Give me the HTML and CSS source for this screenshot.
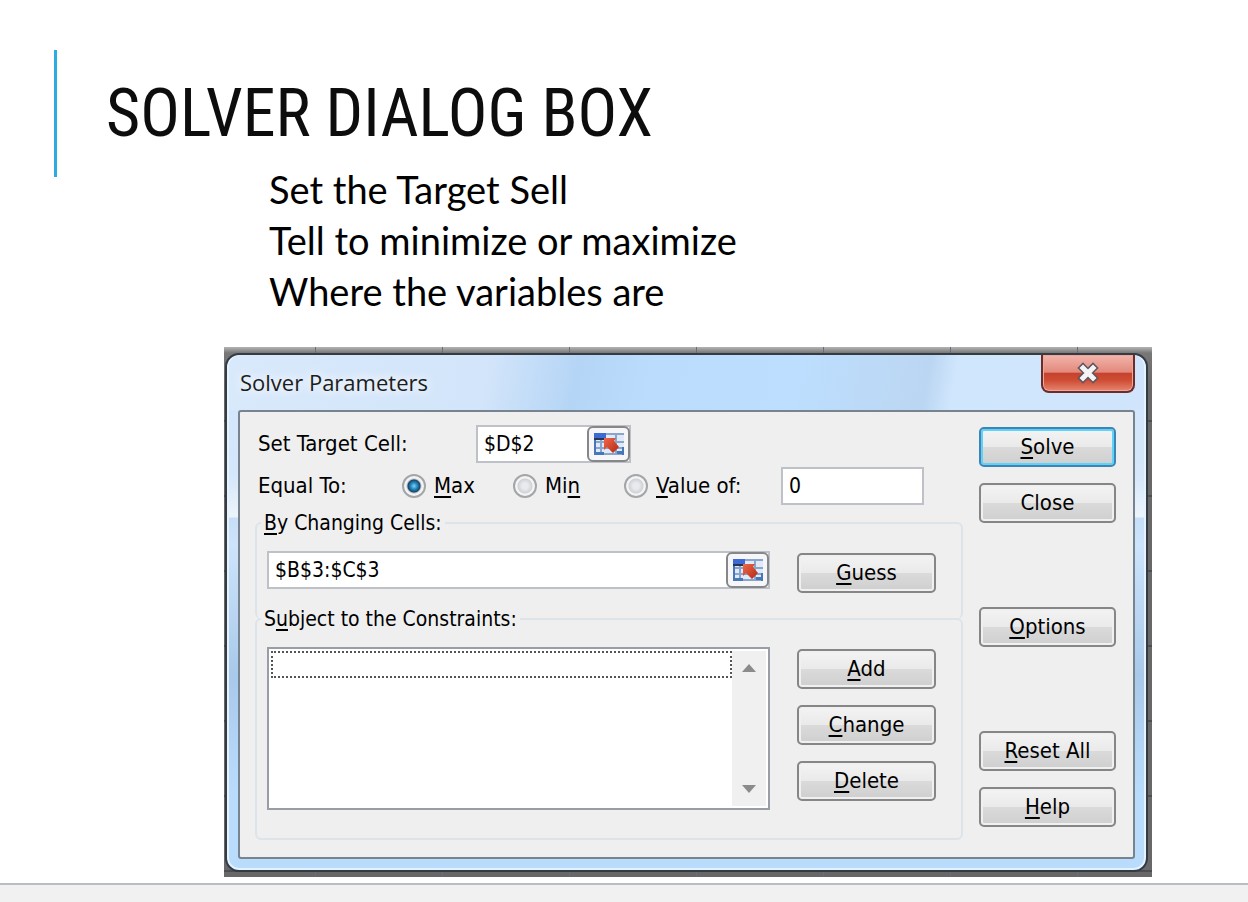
FILE: index.html
```html
<!DOCTYPE html>
<html lang="en">
<head>
  <meta charset="UTF-8">
  <meta name="viewport" content="width=device-width, initial-scale=1.0">
  <title>Solver Dialog Box</title>
  <link rel="stylesheet" href="styles.css">
</head>

<body>
  <svg width="0" height="0" class="sprite" aria-hidden="true">
    <defs>
      <linearGradient id="arrow-red" x1="0" y1="0" x2="1" y2="1">
        <stop offset="0" stop-color="#f0694a"/>
        <stop offset="1" stop-color="#b32712"/>
      </linearGradient>
    </defs>
    <symbol id="icon-ref" viewBox="0 0 32 24">
      <path fill="#dfe9f7" d="M1 1h30v22H1z"/>
      <path fill="#8aa5cd" d="M13 1h18v2H13zM1 9h30v2H1zM1 15h30v2H1zM1 21h30v2H1zM7 8h2v15H7zM22 1h2v22h-2z"/>
      <path fill="#4777b8" d="M1 8h2v15H1zM29 15h2v8h-2zM3 20h8v3H3zM24 19h5v3h-5z"/>
      <path fill="#3c6bd5" d="M1 1h12v5H1z"/>
      <path fill="#27364f" d="M1 6h10v2H1z"/>
      <path fill="url(#arrow-red)" d="M11 6h12l-2 3 5 6-6 6-6-6-3 3z"/>
    </symbol>
  </svg>

  <main class="slide">
    <header class="slide-header">
      <h1>SOLVER DIALOG BOX</h1>
    </header>

    <div class="slide-text">
      <p>Set the Target Sell</p>
      <p>Tell to minimize or maximize</p>
      <p>Where the variables are</p>
    </div>

    <div class="sheet">
      <form class="dialog" onsubmit="return false">
        <div class="titlebar">
          <h2>Solver Parameters</h2>
          <button type="button" class="btn-x" aria-label="Close window">
            <svg width="24" height="22" viewBox="0 0 24 22" fill="none">
              <path d="M7 6l10 10M17 6L7 16" stroke="#5d5560" stroke-width="8" stroke-linecap="square"/>
              <path d="M7 6l10 10M17 6L7 16" stroke="#f4f4f4" stroke-width="5" stroke-linecap="square"/>
            </svg>
          </button>
        </div>

        <div class="client">
          <div class="params">
            <div class="row">
              <label class="row-label" for="target">Set Target Cell:</label>
              <div class="ref ref-small">
                <input type="text" id="target" value="$D$2">
                <button type="button" class="btn-ref" aria-label="Select target cell"><svg width="32" height="24"><use href="#icon-ref"/></svg></button>
              </div>
            </div>

            <div class="row" role="radiogroup" aria-labelledby="equal">
              <span class="equal" id="equal">Equal To:</span>
              <label class="radio"><input type="radio" name="equal" checked><span><u>M</u>ax</span></label>
              <label class="radio"><input type="radio" name="equal"><span>Mi<u>n</u></span></label>
              <label class="radio radio-wide"><input type="radio" name="equal"><span><u>V</u>alue of:</span></label>
              <input type="text" class="value" value="0" aria-label="Value">
            </div>

            <fieldset class="group group-cells">
              <legend><u>B</u>y Changing Cells:</legend>
              <div class="group-body">
                <div class="ref">
                  <input type="text" value="$B$3:$C$3" aria-label="Changing cells">
                  <button type="button" class="btn-ref" aria-label="Select changing cells"><svg width="32" height="24"><use href="#icon-ref"/></svg></button>
                </div>
                <div class="btn-col">
                  <button type="button" class="btn"><span><u>G</u>uess</span></button>
                </div>
              </div>
            </fieldset>

            <fieldset class="group group-constraints">
              <legend>S<u>u</u>bject to the Constraints:</legend>
              <div class="group-body">
                <div class="listbox">
                  <div class="list" role="listbox" aria-label="Constraints" tabindex="0">
                    <div class="list-item" role="option" aria-selected="false"></div>
                  </div>
                  <div class="scrollbar">
                    <button type="button" aria-label="Scroll up"><svg width="14" height="8"><path d="M0 8l7-8 7 8z" fill="#8b8b8b"/></svg></button>
                    <button type="button" aria-label="Scroll down"><svg width="14" height="8"><path d="M0 0h14L7 8z" fill="#8b8b8b"/></svg></button>
                  </div>
                </div>
                <div class="btn-col">
                  <button type="button" class="btn"><span><u>A</u>dd</span></button>
                  <button type="button" class="btn"><span><u>C</u>hange</span></button>
                  <button type="button" class="btn"><span><u>D</u>elete</span></button>
                </div>
              </div>
            </fieldset>
          </div>

          <div class="actions">
            <button type="submit" class="btn btn-default"><span><u>S</u>olve</span></button>
            <button type="button" class="btn"><span>Close</span></button>
            <button type="button" class="btn btn-apart"><span><u>O</u>ptions</span></button>
            <button type="button" class="btn btn-apart"><span><u>R</u>eset All</span></button>
            <button type="button" class="btn"><span><u>H</u>elp</span></button>
          </div>
        </div>
      </form>
    </div>
  </main>

  <footer class="statusbar"></footer>
</body>

</html>
```
FILE: styles.css
```css
* {
  box-sizing: border-box;
}

body {
  display: flex;
  flex-direction: column;
  min-height: 100vh;
  margin: 0;
  background-color: #ffffff;
  color: #000000;
}

h1,
h2,
p {
  margin: 0;
  font-weight: normal;
}

.sprite {
  position: absolute;
}

/* slide */
.slide {
  padding: 50px 96px 6px 54px;
}

.slide-header {
  display: flex;
  align-items: center;
  height: 127px;
  padding-left: 49px;
  border-left: 3px solid #2bace2;
}

.slide-header h1 {
  color: #0d0d0d;
  font: 66px/80px "Tw Cen MT Condensed", "Roboto Condensed", Roboto, sans-serif;
  white-space: nowrap;
}

.slide-text {
  margin: -13px 0 30px 215px;
  font: 38px/51px "Tw Cen MT", Lato, sans-serif;
}

/* strip of the worksheet behind the dialog */
.sheet {
  margin-left: 170px;
  padding: 6px 4px 5px 1px;
  background:
    repeating-linear-gradient(90deg, transparent 0 91px, #6a6c80 91px 92px, transparent 92px 127px),
    repeating-linear-gradient(transparent 0 73px, #4c4e55 73px 75px),
    linear-gradient(#b4b4b4, #777777 6px, #686868 40px);
}

/* dialog */
.dialog {
  padding: 0 11px 11px;
  border: 2px solid #353b43;
  border-radius: 14px;
  background: linear-gradient(#d3e6fb 60px, #d5e7fa 120px, #edf4fc 162px, #c6def7 163px, #cde4fb 190px, #a9c9ea 320px, #b9dcfd 440px);
  box-shadow: inset 0 0 0 2px #e4f3ff;
  font: 22px/28px Tahoma, "DejaVu Sans Condensed", sans-serif;
}

.titlebar {
  display: flex;
  justify-content: space-between;
  height: 55px;
  margin: 0 -9px;
  padding: 0 9px 0 11px;
  border-radius: 12px 12px 0 0;
  background: linear-gradient(100deg, #d8e9fb 0, #d3e5fa 28%, #b5d5f6 38%, #bbdcfd 46%, #bddefe 62%, #bbd6f2 76%, #d0e6fd 79%, #d0e5fb);
}

.titlebar h2 {
  padding-top: 12px;
  color: #1d1d1d;
  font: 22px/30px "Segoe UI", "Open Sans", sans-serif;
  text-shadow: 0 0 12px #ffffff, 0 0 12px #ffffff;
}

.btn-x {
  display: grid;
  place-items: center;
  width: 94px;
  height: 38px;
  padding: 0;
  border: 2px solid #6b2c2a;
  border-top: 0;
  border-radius: 0 0 8px 8px;
  background: linear-gradient(#f3b5ac, #e2887b 48%, #c5412c 50%, #cf4c34 70%, #e58671);
  box-shadow: inset 0 0 0 1px #eda79c;
}

.client {
  display: flex;
  gap: 16px;
  padding: 13px 17px 17px 15px;
  border: 2px solid #77838f;
  border-radius: 3px;
  background-color: #efefef;
}

.params {
  flex: 1;
  display: flex;
  flex-direction: column;
  gap: 4px;
}

u {
  text-decoration-thickness: 2px;
  text-underline-offset: 3px;
}

.row {
  display: flex;
  align-items: center;
  padding-left: 3px;
}

.row-label {
  width: 218px;
}

.equal {
  width: 144px;
}

input[type="text"] {
  min-width: 0;
  height: 38px;
  padding: 0 6px;
  border: 2px solid #bfc1c8;
  border-radius: 0;
  background-color: #ffffff;
  color: #000000;
  font: inherit;
  font-size: 21px;
}

.value {
  width: 143px;
}

.ref {
  flex: 1;
  display: grid;
}
.ref > * {
  grid-area: 1 / 1;
}

.ref-small {
  flex: none;
  width: 155px;
}

.btn-ref {
  display: grid;
  place-items: center;
  justify-self: end;
  width: 43px;
  height: 36px;
  margin: 1px;
  padding: 0;
  border: 2px solid #85878b;
  border-radius: 6px;
  background-color: #f6f6f8;
}

.radio {
  display: flex;
  align-items: center;
  gap: 8px;
  width: 111px;
}

.radio-wide {
  width: 157px;
}

.radio input {
  appearance: none;
  width: 24px;
  height: 24px;
  margin: 0;
  border: 2px solid #a3a5a7;
  border-radius: 50%;
  background: radial-gradient(circle, #e9eaed 3px, #cfd2d7 7px, #f4f4f4 8px);
}
.radio input:checked {
  background: radial-gradient(circle, #7fd4f5 0, #2990c8 3px, #1b4468 6px, #b9c2ca 7px, #f4f4f4 8px);
}

.group {
  min-width: 0;
  margin: 0;
  padding: 14px 25px 28px 10px;
  border: 2px solid #dce4ea;
  border-radius: 6px;
}

.group legend {
  margin-left: -6px;
  padding: 0 3px;
  font-size: 21px;
}

.group-cells {
  padding-bottom: 26px;
  border-bottom: 0;
}

/* the second caption sits on the edge shared by the two groups */
.group-constraints {
  margin-top: -18px;
}

.group-body {
  display: flex;
  gap: 27px;
}

.btn-col {
  display: flex;
  flex-direction: column;
  gap: 16px;
  width: 139px;
  padding-top: 2px;
}

.btn {
  height: 40px;
  padding: 0;
  border: 2px solid #868686;
  border-radius: 5px;
  background: linear-gradient(#f3f3f3, #eaeaea 49%, #dadada 51%, #cfcfcf);
  box-shadow: inset 0 0 0 2px #f0f0f0;
  color: #000000;
  font: inherit;
}

.btn-default {
  border-color: #3e85b5;
  box-shadow: inset 0 0 0 2px #5fd2f7;
}

.listbox {
  flex: 1;
  display: flex;
  height: 163px;
  padding: 2px;
  border: 2px solid #989da6;
  background-color: #ffffff;
}

.list {
  flex: 1;
}

.list-item {
  height: 27px;
  border: 2px dotted #555555;
}

.scrollbar {
  display: flex;
  flex-direction: column;
  justify-content: space-between;
  width: 34px;
  background-color: #f0f0f0;
}

.scrollbar button {
  display: grid;
  place-items: center;
  height: 34px;
  padding: 0;
  border: 0;
  background: none;
}

.actions {
  display: flex;
  flex-direction: column;
  gap: 16px;
  width: 137px;
  padding-top: 2px;
}

.btn-apart {
  margin-top: 68px;
}

.statusbar {
  flex: 1;
  border-top: 2px solid #b9bec5;
  background-color: #f1f1f1;
}
```
